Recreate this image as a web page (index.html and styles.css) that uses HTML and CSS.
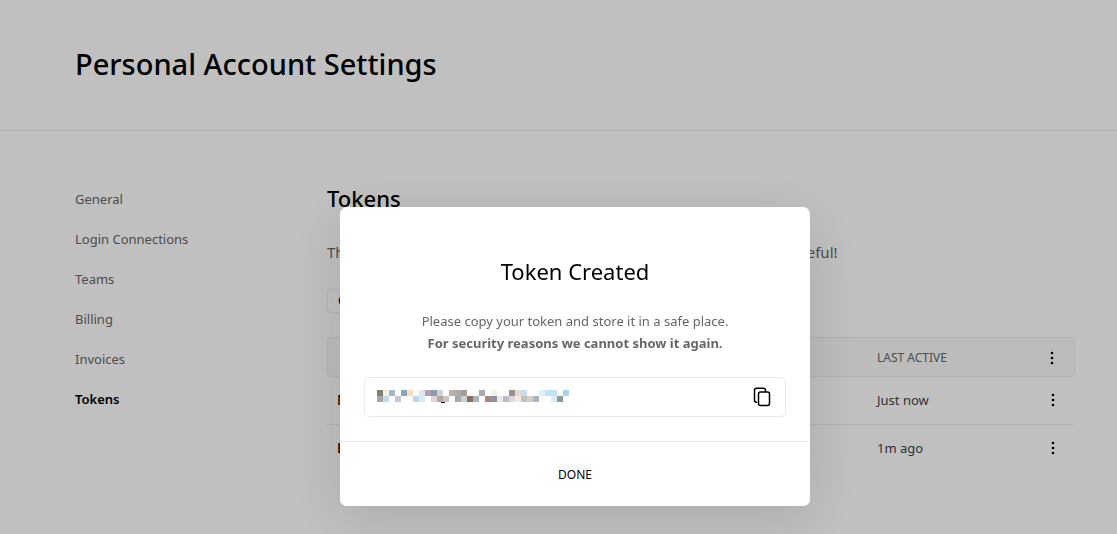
FILE: index.html
```html
<!DOCTYPE html>
<html lang="en">
<head>
<meta charset="utf-8">
<title>Personal Account Settings</title>
<link rel="stylesheet" href="styles.css">
</head>
<body>
<header class="page-header"><h1>Personal Account Settings</h1></header>
<div class="layout">
  <nav class="side-nav">
    <a href="#general">General</a>
    <a href="#login">Login Connections</a>
    <a href="#teams">Teams</a>
    <a href="#billing">Billing</a>
    <a href="#invoices">Invoices</a>
    <a href="#tokens" class="active">Tokens</a>
  </nav>
  <main class="content">
    <h2>Tokens</h2>
    <p class="intro">These tokens allow other apps to control your whole account. Be careful!</p>
    <button class="create" type="button">Create</button>
    <table class="tokens">
      <thead>
        <tr><th></th><th class="time">LAST ACTIVE</th><th class="menu"><button class="dots" type="button" aria-label="Actions"><svg width="4" height="14" viewBox="0 0 4 14"><circle cx="2" cy="2" r="1.3"/><circle cx="2" cy="7" r="1.3"/><circle cx="2" cy="12" r="1.3"/></svg></button></th></tr>
      </thead>
      <tbody>
        <tr><td>New token</td><td class="time">Just now</td><td class="menu"><button class="dots" type="button" aria-label="Actions"><svg width="4" height="14" viewBox="0 0 4 14"><circle cx="2" cy="2" r="1.3"/><circle cx="2" cy="7" r="1.3"/><circle cx="2" cy="12" r="1.3"/></svg></button></td></tr>
        <tr><td>Login</td><td class="time">1m ago</td><td class="menu"><button class="dots" type="button" aria-label="Actions"><svg width="4" height="14" viewBox="0 0 4 14"><circle cx="2" cy="2" r="1.3"/><circle cx="2" cy="7" r="1.3"/><circle cx="2" cy="12" r="1.3"/></svg></button></td></tr>
      </tbody>
    </table>
  </main>
</div>
<div class="overlay">
  <section class="dialog" role="dialog" aria-modal="true" aria-labelledby="dialog-title">
    <div class="dialog-body">
      <h3 id="dialog-title">Token Created</h3>
      <p>Please copy your token and store it in a safe place.<br><strong>For security reasons we cannot show it again.</strong></p>
      <div class="token-field">
        <svg class="mosaic" width="192" height="14" viewBox="0 0 192 14" shape-rendering="crispEdges" role="img" aria-label="Hidden token">
          <g transform="scale(6)">
            <path fill="#7f8377" d="M0 0h1v1h-1z"/><path fill="#f6eedb" d="M1 0h1v1h-1z"/><path fill="#a6b6cc" d="M2 0h1v1h-1z"/><path fill="#88a6bc" d="M4 0h1v1h-1z"/><path fill="#f5dfc4" d="M5 0h1v1h-1z"/><path fill="#fdf8f2" d="M6 0h1v1h-1z"/><path fill="#dde6ea" d="M7 0h1v1h-1z"/><path fill="#b1a0b9" d="M8 0h1v1h-1z"/><path fill="#8e99aa" d="M9 0h1v1h-1z"/><path fill="#cbd6d2" d="M10 0h1v1h-1z"/><path fill="#b9b2a9" d="M12 0h1v1h-1z"/><path fill="#a9adb2" d="M13 0h1v1h-1z"/><path fill="#ab9b94" d="M14 0h1v1h-1z"/><path fill="#a9abac" d="M17 0h1v1h-1z"/><path fill="#f6efe4" d="M19 0h1v1h-1z"/><path fill="#9a8e90" d="M22 0h1v1h-1z"/><path fill="#e2dccd" d="M23 0h1v1h-1z"/><path fill="#c2dff4" d="M24 0h1v1h-1z"/><path fill="#def0fa" d="M27 0h1v1h-1z"/><path fill="#c2e2f8" d="M28 0h2v1h-2z"/><path fill="#fffef2" d="M30 0h1v1h-1z"/><path fill="#a6d5ee" d="M31 0h1v1h-1z"/>
            <path fill="#a3a9aa" d="M0 1h1v1h-1z"/><path fill="#c4d9e6" d="M1 1h1v1h-1z"/><path fill="#c7c5cf" d="M3 1h1v1h-1z"/><path fill="#fafeff" d="M5 1h1v1h-1z"/><path fill="#bfd5eb" d="M6 1h1v1h-1z"/><path fill="#d6ecf8" d="M7 1h1v1h-1z"/><path fill="#dfd5d6" d="M9 1h1v1h-1z"/><path fill="#afa9a4" d="M10 1h1v1h-1z"/><path fill="#d0c2be" d="M11 1h1v1h-1z"/><path fill="#a5a8ab" d="M13 1h1v1h-1z"/><path fill="#c9d4d0" d="M14 1h1v1h-1z"/><path fill="#896f60" d="M15 1h1v1h-1z"/><path fill="#a7b5be" d="M16 1h1v1h-1z"/><path fill="#a38780" d="M18 1h1v1h-1z"/><path fill="#8c94a4" d="M19 1h1v1h-1z"/><path fill="#e8eae3" d="M20 1h1v1h-1z"/><path fill="#c4b9ca" d="M21 1h1v1h-1z"/><path fill="#dcd7df" d="M22 1h1v1h-1z"/><path fill="#f4ebdd" d="M23 1h1v1h-1z"/><path fill="#c3c2c1" d="M24 1h1v1h-1z"/><path fill="#d4cfc6" d="M25 1h1v1h-1z"/><path fill="#a9b6bf" d="M26 1h1v1h-1z"/><path fill="#fffef4" d="M27 1h1v1h-1z"/><path fill="#d8edfc" d="M29 1h1v1h-1z"/><path fill="#859f9c" d="M30 1h1v1h-1z"/>
          </g>
          <path fill="#111" d="M64 12h4v1h-4z"/>
        </svg>
        <button class="copy" type="button" aria-label="Copy token"><svg width="18" height="20" viewBox="0 0 18 20" fill="none" stroke="#000" stroke-width="1.5" stroke-linecap="round" stroke-linejoin="round"><rect x="5.5" y="5" width="11" height="13.5" rx="2"/><path d="M3.5 15.2C2.2 15.2 1.5 14.4 1.5 13.2V3.2C1.5 2 2.3 1.2 3.5 1.2H10.5C11.8 1.2 12.5 2 12.5 3.2V4.5"/></svg></button>
      </div>
    </div>
    <button class="done" type="button">DONE</button>
  </section>
</div>
</body>
</html>
```
FILE: styles.css
```css
* { box-sizing: border-box; }
body {
  margin: 0;
  min-height: 100vh;
  overflow: hidden;
  background: #fff;
  color: #000;
  font: 14px/20px "Segoe UI", "Noto Sans", "Open Sans", sans-serif;
}
h1, h2, h3, p { margin: 0; }
button { font: inherit; color: inherit; cursor: pointer; }
.page-header {
  padding: 40px 42px 42px 75px;
  border-bottom: 1px solid #eaeaea;
}
h1 { font-size: 29px; line-height: 48px; font-weight: 500; }
.layout {
  display: flex;
  padding: 48px 42px 0 75px;
}
.side-nav {
  display: flex;
  flex-direction: column;
  flex: 0 0 252px;
  align-items: flex-start;
}
.side-nav a {
  padding: 10px 0;
  color: #666;
  font-size: 13px;
  text-decoration: none;
}
.side-nav .active { color: #000; font-weight: 600; }
.content { flex: 1; }
h2 { padding-top: 3px; font-size: 22px; line-height: 32px; font-weight: 500; }
.intro { margin-top: 26px; color: #666; font-size: 15px; line-height: 24px; }
.create {
  display: block;
  height: 24px;
  margin: 25px 0 24px;
  padding: 0 10px;
  border: 1px solid #eaeaea;
  border-radius: 5px;
  background: #fff;
  font-size: 12px;
}
.tokens {
  width: 100%;
  table-layout: fixed;
  border-collapse: separate;
  border-spacing: 0;
  color: #444;
}
.tokens th {
  height: 40px;
  padding: 1px 0 0;
  border: solid #eaeaea;
  border-width: 1px 0;
  background: #fafafa;
  color: #666;
  font-size: 12px;
  font-weight: 400;
  text-align: left;
}
.tokens th:first-child { border-left-width: 1px; border-radius: 5px 0 0 5px; }
.tokens th:last-child { border-right-width: 1px; border-radius: 0 5px 5px 0; }
.tokens td { height: 48px; padding: 0 0 2px; font-size: 13px; }
.tokens td:first-child { padding-left: 10px; color: #000; font-size: 14px; font-weight: 500; }
.tokens tbody tr:first-child td { border-bottom: 1px solid #eaeaea; }
.tokens .time { width: 173px; }
.tokens .menu { width: 25px; }
.dots {
  display: block;
  padding: 0;
  border: 0;
  background: none;
  line-height: 0;
}
.dots svg { fill: #000; }
.tokens td .dots { padding-left: 1px; }
.overlay {
  position: fixed;
  inset: 0;
  display: flex;
  justify-content: center;
  align-items: flex-start;
  padding: 207px 0 0 33px;
  background: rgba(0, 0, 0, 0.247);
}
.dialog {
  width: 470px;
  max-width: 100%;
  overflow: hidden;
  border-radius: 7px;
  background: #fff;
  box-shadow: 0 12px 60px rgba(0, 0, 0, 0.12);
  text-align: center;
}
.dialog-body { padding: 47px 24px 24px; }
h3 { font-size: 22px; line-height: 34px; font-weight: 400; }
.dialog p { margin-top: 22px; color: #666; font-size: 13px; line-height: 22px; }
.dialog strong { font-weight: 700; }
.token-field {
  display: flex;
  align-items: center;
  justify-content: space-between;
  height: 40px;
  margin-top: 23px;
  padding: 0 14px 0 12px;
  border: 1px solid #eaeaea;
  border-radius: 5px;
}
.copy { padding: 0; border: 0; background: none; line-height: 0; }
.done {
  width: 100%;
  height: 65px;
  padding: 2px 0 0;
  border: 0;
  border-top: 1px solid #eaeaea;
  background: #fff;
  font-size: 12px;
}
```
